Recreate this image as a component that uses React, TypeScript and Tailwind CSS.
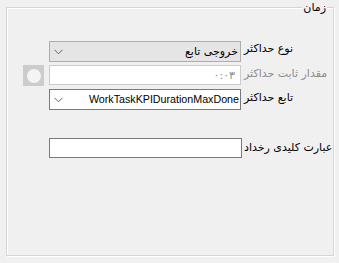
import React from 'react';

const font = { fontFamily: '"DejaVu Sans", "Noto Sans", sans-serif' };

const Chevron = () => (
  <svg width="9" height="6" viewBox="0 0 9 6" className="shrink-0">
    <path d="M0.5 0.8 L4.5 4.8 L8.5 0.8" fill="none" stroke="#555" strokeWidth="0.9" />
  </svg>
);

export default function App() {
  return (
    <div className="w-[339px] h-[263px] bg-[#f0f0f0] pt-[7px] pl-[6px] text-[11px] text-black" style={font}>
      {/* group box */}
      <div className="relative w-[328px] h-[249px] border border-[#d5d5d5] shadow-[inset_1px_1px_0_#fff,1px_1px_0_#fff]">
        <span dir="rtl" className="absolute right-[6px] top-[-6px] bg-[#f0f0f0] px-[1px] leading-[12px]">زمان</span>

        <div className="pl-[16px] pt-[33px] flex flex-col">
          {/* نوع حداکثر */}
          <div className="flex items-start">
            <div className="w-[26px]" />
            <div className="w-[192px] h-[21px] bg-[#e5e5e5] border border-[#adadad] flex items-center justify-between pl-[4px] pr-[2px]">
              <Chevron />
              <span dir="rtl" className="leading-none">خروجی تابع</span>
            </div>
            <span dir="rtl" className="ml-[3px] pt-[2px] leading-[12px]">نوع حداکثر</span>
          </div>

          {/* مقدار ثابت حداکثر */}
          <div className="flex items-start mt-[3px]">
            <div className="w-[21px] h-[21px] bg-[#cccccc] flex items-center justify-center mr-[5px]">
              <div className="w-[14px] h-[14px] rounded-full bg-[#f4f4f4]" />
            </div>
            <div className="w-[192px] h-[20px] bg-white border border-[#cccccc] flex items-center justify-end pr-[5px]">
              <span dir="rtl" className="text-[#8d8d8d] leading-none">۰:۰۳</span>
            </div>
            <span dir="rtl" className="ml-[3px] pt-[3px] leading-[12px] text-[#8d8d8d]">مقدار ثابت حداکثر</span>
          </div>

          {/* تابع حداکثر */}
          <div className="flex items-start mt-[3px]">
            <div className="w-[26px]" />
            <div className="w-[192px] h-[21px] bg-white border border-[#7a7a7a] flex items-center justify-between pl-[4px] pr-[1px]">
              <Chevron />
              <span className="leading-none text-[10.7px]" style={{ fontFamily: '"Liberation Sans", Arial, sans-serif' }}>WorkTaskKPIDurationMaxDone</span>
            </div>
            <span dir="rtl" className="ml-[3px] pt-[3px] leading-[12px]">تابع حداکثر</span>
          </div>

          {/* عبارت کلیدی رخداد */}
          <div className="flex items-start mt-[28px]">
            <div className="w-[26px]" />
            <div className="w-[193px] h-[20px] bg-white border border-[#7a7a7a]" />
            <span dir="rtl" className="ml-[2px] pt-[4px] leading-[12px]">عبارت کلیدی رخداد</span>
          </div>
        </div>
      </div>
    </div>
  );
}
